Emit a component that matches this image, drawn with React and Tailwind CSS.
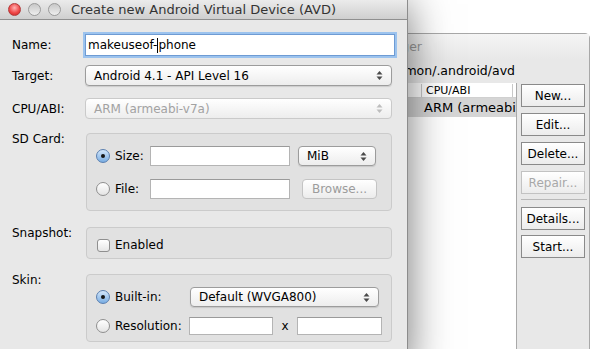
import React from "react";

const UpDown = ({ dim }) => {
  const c = dim ? "#bdbdbd" : "#4a4a4a";
  return (
    <svg width="7" height="11" viewBox="0 0 7 11">
      <path d="M3.5 1 L6.5 4.5 H0.5 Z" fill={c} />
      <path d="M3.5 10 L6.5 6.5 H0.5 Z" fill={c} />
    </svg>
  );
};

const Select = ({ children, className, dim }) => (
  <div
    className={`flex items-center justify-between rounded-[4px] border pl-2 pr-[8px] bg-gradient-to-b from-white to-[#ededed] ${
      dim ? "border-[#cacaca] text-[#a2a2a2]" : "border-[#9c9c9c] text-black shadow-[0_1px_1px_rgba(0,0,0,0.12)]"
    } ${className}`}
  >
    <span className="whitespace-nowrap">{children}</span>
    <UpDown dim={dim} />
  </div>
);

const Radio = ({ on }) =>
  on ? (
    <span className="flex h-[14px] w-[14px] shrink-0 items-center justify-center rounded-full border border-[#5a7fb0] bg-gradient-to-b from-[#d3e6fa] to-[#79ade2]">
      <span className="h-[4px] w-[4px] rounded-full bg-[#151515]" />
    </span>
  ) : (
    <span className="h-[14px] w-[14px] shrink-0 rounded-full border border-[#8f8f8f] bg-gradient-to-b from-white to-[#e4e4e4]" />
  );

const Field = ({ className }) => (
  <div className={`border border-[#b4b4b4] border-t-[#9a9a9a] bg-white ${className}`} />
);

const Button = ({ children, disabled }) => (
  <div
    className={`flex h-[23px] w-[64px] items-center justify-center border bg-gradient-to-b from-white to-[#ececec] ${
      disabled ? "border-[#c2c2c2] text-[#a8a8a8]" : "border-[#8a8a8a] text-black"
    }`}
  >
    {children}
  </div>
);

const Group = ({ className, children }) => (
  <div className={`w-[306px] rounded-[4px] border border-[#cbcbcb] bg-[#e1e1e1] ${className}`}>{children}</div>
);

export default function App() {
  return (
    <div className="relative h-[349px] w-[590px] overflow-hidden bg-white font-['DejaVu_Sans',sans-serif] text-[12px] leading-[16px] text-black">
      {/* window behind: AVD manager */}
      <div className="absolute left-[300px] top-[33px] flex h-[330px] w-[290px] flex-col rounded-tr-[5px] border border-[#a8a8a8] bg-[#e8e8e8]">
        <div className="flex h-[25px] items-center bg-gradient-to-b from-[#f5f5f5] to-[#e8e8e8]">
          <div className="flex w-[121px] justify-end whitespace-nowrap text-[12.5px] text-[#9c9c9c]">Device Manager</div>
        </div>
        <div className="flex h-[24px] items-center">
          <div className="flex w-[214px] justify-end whitespace-nowrap text-[12.5px]">/Users/ramon/.android/avd</div>
        </div>
        <div className="flex flex-1">
          <div className="flex h-full w-[216px] flex-col overflow-hidden border-r border-[#a9a9a9] bg-white">
            <div className="flex h-[15px] shrink-0 items-center border-b border-[#d0d0d0] text-[11px] leading-[13px]">
              <div className="w-[121px] shrink-0 border-r border-[#c8c8c8] pl-1">AVD Name</div>
              <div className="w-[91px] shrink-0 border-r border-[#c8c8c8] pl-[4px]">CPU/ABI</div>
              <div className="shrink-0 pl-1">API</div>
            </div>
            <div className="flex h-[19px] shrink-0 items-center bg-[#d5d5d5] text-[13px]">
              <div className="w-[121px] shrink-0 pl-1">makeuseof</div>
              <div className="shrink-0 whitespace-nowrap pl-[2px]">ARM (armeabi-v7a)</div>
            </div>
          </div>
          <div className="flex flex-col pl-[4px] pt-[1px]">
            <div className="flex flex-col gap-[6px]">
              <Button>New...</Button>
              <Button>Edit...</Button>
              <Button>Delete...</Button>
              <Button disabled>Repair...</Button>
            </div>
            <div className="mb-[7px] mt-[5px] h-px w-[66px] bg-[#b8b8b8]" />
            <div className="flex flex-col gap-[5px]">
              <Button>Details...</Button>
              <Button>Start...</Button>
            </div>
          </div>
        </div>
      </div>

      {/* front dialog */}
      <div className="absolute left-0 top-0 z-10 flex h-[370px] w-[408px] flex-col border-r border-[#8c8c8c] bg-[#e8e8e8] shadow-[0_4px_40px_rgba(0,0,0,0.55)]">
        <div className="relative flex h-[20px] shrink-0 items-center gap-[7px] border-b border-[#8f8f8f] bg-gradient-to-b from-[#ebebeb] to-[#cfcfcf] pl-[8px]">
          <span className="h-[13px] w-[13px] rounded-full border border-[#b23a3a] bg-[radial-gradient(circle_at_50%_35%,#ffb3b3,#f04a4a_55%,#c81f1f)]" />
          <span className="h-[13px] w-[13px] rounded-full border border-[#9a9a9a] bg-gradient-to-b from-[#c8c8c8] to-[#eeeeee]" />
          <span className="h-[13px] w-[13px] rounded-full border border-[#9a9a9a] bg-gradient-to-b from-[#c8c8c8] to-[#eeeeee]" />
          <div className="absolute inset-0 flex items-center justify-center text-[13px] text-[#333]">
            Create new Android Virtual Device (AVD)
          </div>
        </div>

        <div className="flex flex-col pl-[12px]">
          <div className="mt-[14px] flex items-center">
            <div className="w-[73px]">Name:</div>
            <div className="flex h-[22px] w-[310px] items-center border border-[#6e9bd3] bg-white pl-[2px] shadow-[0_0_0_2px_#9cc3ee]">
              <span>makeuseof-</span>
              <span className="inline-block h-[15px] w-px bg-black" />
              <span>phone</span>
            </div>
          </div>

          <div className="mt-[9px] flex items-center">
            <div className="w-[73px]">Target:</div>
            <Select className="h-[21px] w-[307px]">Android 4.1 - API Level 16</Select>
          </div>

          <div className="mt-[12px] flex items-center">
            <div className="w-[73px]">CPU/ABI:</div>
            <Select dim className="h-[21px] w-[307px]">ARM (armeabi-v7a)</Select>
          </div>

          <div className="mt-[14px] flex items-start">
            <div className="-mt-[2px] w-[74px]">SD Card:</div>
            <Group className="h-[78px] pl-[9px] pt-[12px]">
              <div className="flex items-center">
                <div className="flex w-[54px] items-center gap-[5px]">
                  <Radio on />
                  <span>Size:</span>
                </div>
                <Field className="h-[20px] w-[140px]" />
                <Select className="ml-[8px] h-[20px] w-[78px]">MiB</Select>
              </div>
              <div className="mt-[13px] flex items-center">
                <div className="flex w-[54px] items-center gap-[5px]">
                  <Radio />
                  <span>File:</span>
                </div>
                <Field className="h-[20px] w-[140px]" />
                <div className="ml-[12px] flex h-[20px] w-[75px] items-center justify-center rounded-[4px] border border-[#c4c4c4] bg-gradient-to-b from-white to-[#ececec] text-[#9c9c9c]">
                  Browse...
                </div>
              </div>
            </Group>
          </div>

          <div className="mt-[16px] flex items-start">
            <div className="-mt-[2px] w-[74px]">Snapshot:</div>
            <Group className="flex h-[32px] items-center pl-[10px] pt-[4px]">
              <span className="h-[13px] w-[13px] rounded-[3px] border border-[#8f8f8f] bg-gradient-to-b from-white to-[#e6e6e6]" />
              <span className="ml-[5px]">Enabled</span>
            </Group>
          </div>

          <div className="mt-[15px] flex items-start">
            <div className="-mt-[2px] w-[74px]">Skin:</div>
            <Group className="h-[68px] pl-[9px] pt-[12px]">
              <div className="flex items-center">
                <div className="flex w-[94px] items-center gap-[5px]">
                  <Radio on />
                  <span>Built-in:</span>
                </div>
                <Select className="h-[20px] w-[189px]">Default (WVGA800)</Select>
              </div>
              <div className="mt-[10px] flex items-center">
                <div className="flex w-[93px] items-center gap-[5px]">
                  <Radio />
                  <span>Resolution:</span>
                </div>
                <Field className="h-[18px] w-[84px]" />
                <span className="w-[24px] text-center">x</span>
                <Field className="h-[18px] w-[85px]" />
              </div>
            </Group>
          </div>
        </div>
      </div>
    </div>
  );
}
